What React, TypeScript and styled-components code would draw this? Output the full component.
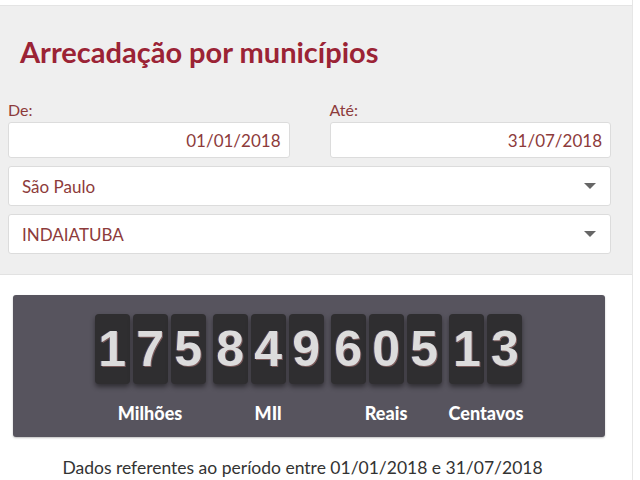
import styled, { createGlobalStyle } from "styled-components";

const GlobalStyle = createGlobalStyle`
  html, body {
    margin: 0;
    padding: 0;
    background: #ffffff;
  }
  body {
    font-family: Lato, "Open Sans", sans-serif;
  }
`;

const groups = [
  { digits: "175", label: "Milhões" },
  { digits: "849", label: "MIl" },
  { digits: "605", label: "Reais" },
  { digits: "13", label: "Centavos" },
];

export default function App() {
  return (
    <>
      <GlobalStyle />
      <Page>
        <FilterPanel>
          <Title>Arrecadação por municípios</Title>
          <DateRow>
            <Field>
              <Label>De:</Label>
              <DateInput>01/01/2018</DateInput>
            </Field>
            <Field>
              <Label>Até:</Label>
              <DateInput>31/07/2018</DateInput>
            </Field>
          </DateRow>
          <Select>
            São Paulo
            <Caret />
          </Select>
          <Select>
            INDAIATUBA
            <Caret />
          </Select>
        </FilterPanel>

        <Counter>
          {groups.map((group) => (
            <Group key={group.label}>
              <Digits>
                {group.digits.split("").map((d, i) => (
                  <DigitCard key={i}>{d}</DigitCard>
                ))}
              </Digits>
              <GroupLabel>{group.label}</GroupLabel>
            </Group>
          ))}
        </Counter>

        <Footnote>
          Dados referentes ao período entre 01/01/2018 e 31/07/2018
        </Footnote>
      </Page>
    </>
  );
}

const Page = styled.div`
  width: 633px;
  min-height: 480px;
  border-right: 1px solid #e6e6e6;
  box-sizing: border-box;
  padding-top: 5px;
`;

const FilterPanel = styled.div`
  background: #efefef;
  border-top: 1px solid #e4e4e4;
  border-bottom: 1px solid #e2e2e2;
  padding: 28px 21px 20px 8px;
  display: flex;
  flex-direction: column;
  gap: 8px;
`;

const Title = styled.h1`
  margin: 0 0 22px 12px;
  font-size: 29px;
  font-weight: 700;
  line-height: 36px;
  color: #9b2335;
`;

const DateRow = styled.div`
  display: flex;
  gap: 40px;
`;

const Field = styled.div`
  flex: 1;
  display: flex;
  flex-direction: column;
  gap: 3px;
`;

const Label = styled.label`
  font-size: 16px;
  line-height: 19px;
  color: #8d3b3b;
`;

const DateInput = styled.div`
  height: 36px;
  box-sizing: border-box;
  background: #ffffff;
  border: 1px solid #dcdcdc;
  border-radius: 3px;
  padding: 0 8px;
  display: flex;
  align-items: center;
  justify-content: flex-end;
  font-size: 17px;
  color: #8d3b3b;
`;

const Select = styled.div`
  height: 40px;
  box-sizing: border-box;
  background: #ffffff;
  border: 1px solid #dcdcdc;
  border-radius: 3px;
  padding: 0 14px 0 13px;
  display: flex;
  align-items: center;
  justify-content: space-between;
  font-size: 17px;
  color: #8d3b3b;
`;

const Caret = styled.span`
  width: 0;
  height: 0;
  border-left: 6px solid transparent;
  border-right: 6px solid transparent;
  border-top: 6px solid #666666;
`;

const Counter = styled.div`
  margin: 20px 27px 0 13px;
  height: 142px;
  box-sizing: border-box;
  background: #57545e;
  border-radius: 3px;
  box-shadow: 0 1px 2px rgba(0, 0, 0, 0.25);
  padding-top: 19px;
  display: flex;
  justify-content: center;
  gap: 7px;
`;

const Group = styled.div`
  display: flex;
  flex-direction: column;
  align-items: center;
`;

const Digits = styled.div`
  display: flex;
  gap: 3px;
`;

const DigitCard = styled.div`
  width: 35px;
  height: 70px;
  background: #2f2e30;
  border-radius: 4px;
  box-shadow: 0 3px 5px rgba(0, 0, 0, 0.45);
  display: flex;
  align-items: center;
  justify-content: center;
  font-family: "Liberation Sans", Arial, sans-serif;
  font-weight: 700;
  font-size: 50px;
  color: #dcdcdc;
  text-shadow: 1px 1px 0 #7a5a5a, -1px 0 0 #4a4a6a;
`;

const GroupLabel = styled.div`
  margin-top: 18px;
  font-size: 18px;
  font-weight: 900;
  color: #ffffff;
  line-height: 22px;
`;

const Footnote = styled.p`
  margin: 21px 27px 0 0;
  text-align: center;
  font-size: 17.5px;
  line-height: 20px;
  color: #333333;
`;
